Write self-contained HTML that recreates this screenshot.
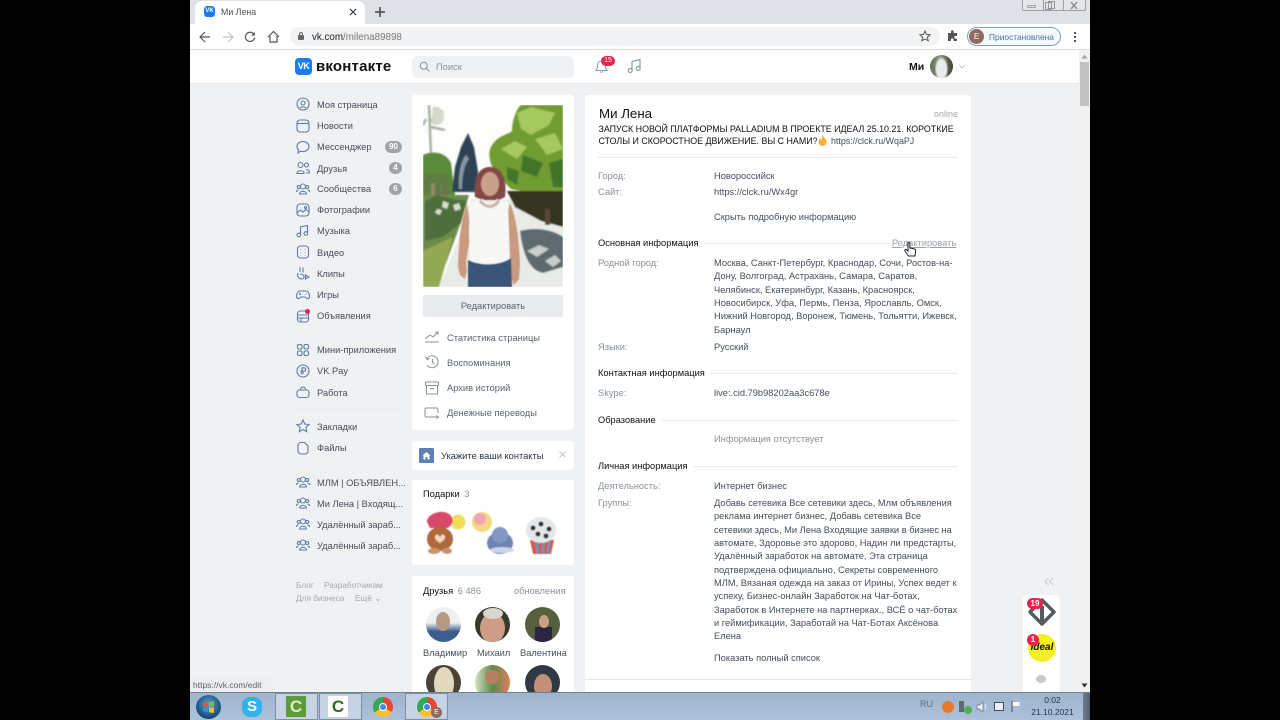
<!DOCTYPE html>
<html lang="ru"><head><meta charset="utf-8"><title>Ми Лена</title>
<style>
html,body{margin:0;padding:0;background:#000;width:1280px;height:720px;overflow:hidden}
body{font-family:"Liberation Sans","Noto Sans CJK SC",sans-serif;position:relative}
div,span,svg{position:absolute}
.t{white-space:nowrap;font-size:9.3px;line-height:12px;color:#2a3a4a;margin-top:1px}
.g{color:#8a929b}.b{color:#454f5b}.k{color:#111}.c{color:#5b6570}
.card{background:#fff;border-radius:3px}
.ln{background:#e8eaed;height:1px}
.ic{fill:none;stroke:#5f7ba6;stroke-width:1.1;width:14px;height:14px}
.badge{background:#a0a3a8;color:#fff;border-radius:7px;height:12px;font-size:8px;line-height:12px;text-align:center;font-weight:bold}
.av{border-radius:50%;overflow:hidden}
.pi{fill:none;stroke:#8b939c;stroke-width:1;width:16px;height:14px}
</style></head><body>
<div id="win" style="left:190px;top:0;width:900px;height:720px;background:#eff1f3;overflow:hidden;filter:blur(.35px)">

<!-- tab strip -->
<div style="left:0;top:0;width:900px;height:24px;background:#dee1e6"></div>
<div style="left:5px;top:1px;width:170px;height:23px;background:#fff;border-radius:7px 7px 0 0"></div>
<div style="left:14px;top:6px;width:11px;height:11px;background:#1a7cf2;border-radius:3px;color:#fff;font-size:6px;line-height:11px;text-align:center;font-weight:bold">VK</div>
<div class="t" style="left:31px;top:5px;color:#4a4f55;font-size:8.800px">Ми Лена</div>
<svg style="left:159px;top:8px;width:8px;height:8px" viewBox="0 0 9 9"><path d="M1 1l7 7M8 1L1 8" stroke="#333" stroke-width="1.300"/></svg>
<svg style="left:185px;top:7px;width:10px;height:10px" viewBox="0 0 10 10"><path d="M5 0v10M0 5h10" stroke="#444" stroke-width="1.500"/></svg>
<!-- window buttons -->
<div style="left:832px;top:0;width:64px;height:11px;border:1px solid #9aa0a6;border-top:0;border-radius:0 0 2px 2px;box-sizing:border-box;background:#e3e5e8"></div>
<div style="left:853px;top:0;width:1px;height:11px;background:#9aa0a6"></div>
<div style="left:873px;top:0;width:1px;height:11px;background:#9aa0a6"></div>
<div style="left:837px;top:5px;width:9px;height:3px;border:1px solid #9aa0a6;border-radius:1px;box-sizing:border-box"></div>
<div style="left:855px;top:2px;width:7px;height:8px;border:1px solid #8f959b;box-sizing:border-box"></div>
<div style="left:858px;top:1px;width:7px;height:8px;border:1px solid #8f959b;box-sizing:border-box"></div>
<svg style="left:880px;top:2px;width:8px;height:7px" viewBox="0 0 8 7"><path d="M1 0l6 7M7 0L1 7" stroke="#858b91" stroke-width="1.400"/></svg>

<!-- toolbar -->
<div style="left:0;top:24px;width:900px;height:25px;background:#fff"></div>
<div style="left:0;top:49px;width:900px;height:1px;background:#d8dade"></div>
<svg style="left:9px;top:31px;width:12px;height:12px" viewBox="0 0 12 12"><path d="M11 6H1.500M6 1L1 6l5 5" fill="none" stroke="#555" stroke-width="1.200"/></svg>
<svg style="left:32px;top:31px;width:12px;height:12px" viewBox="0 0 12 12"><path d="M1 6h9.500M6 1l5 5-5 5" fill="none" stroke="#c0c3c7" stroke-width="1.200"/></svg>
<svg style="left:54px;top:31px;width:12px;height:12px" viewBox="0 0 12 12"><path d="M10 3.500A4.600 4.600 0 1 0 10.600 6.500" fill="none" stroke="#555" stroke-width="1.200"/><path d="M10.800 1v3.600H7.200z" fill="#555"/></svg>
<svg style="left:77px;top:30px;width:13px;height:13px" viewBox="0 0 13 13"><path d="M1 7l5.500-5.500L12 7M3 6v6h7V6" fill="none" stroke="#555" stroke-width="1.200"/></svg>
<div style="left:100px;top:27px;width:650px;height:19px;background:#f1f3f4;border-radius:10px"></div>
<div style="left:108px;top:35px;width:6px;height:5px;background:#666;border-radius:1px"></div>
<div style="left:109px;top:32px;width:4px;height:4px;border:1px solid #666;border-bottom:0;border-radius:2px 2px 0 0;box-sizing:border-box"></div>
<div class="t" style="left:122px;top:31px;font-size:9.800px;color:#777"><span style="position:static;color:#222">vk.com</span>/milena89898</div>
<svg style="left:729px;top:30px;width:12px;height:12px" viewBox="0 0 12 12"><path d="M6 1l1.500 3.400 3.700.4-2.800 2.400.8 3.600L6 9l-3.200 1.800.8-3.600L.8 4.800l3.700-.4z" fill="none" stroke="#555" stroke-width="1"/></svg>
<svg style="left:757px;top:30px;width:12px;height:12px" viewBox="0 0 12 12"><path d="M1 3h3V1.500a1.300 1.300 0 0 1 2.600 0V3H10v3h-1.300a1.400 1.400 0 0 0 0 2.800H10V11H6.500V9.700a1.300 1.300 0 0 0-2.600 0V11H1z" fill="#555"/></svg>
<div style="left:777px;top:27px;width:94px;height:19px;border:1px solid #7f9cc7;border-radius:10px;box-sizing:border-box;background:#f5f8fd"></div>
<div style="left:779px;top:29px;width:15px;height:15px;border-radius:50%;background:#93695f;color:#fff;font-size:8px;line-height:15px;text-align:center">E</div>
<div class="t" style="left:799px;top:30px;color:#4a72b0;font-size:8.400px">Приостановлена</div>
<div style="left:884px;top:32px;width:2px;height:2px;background:#555;box-shadow:0 4px 0 #555,0 8px 0 #555"></div>

<!-- vk header -->
<div style="left:0;top:50px;width:889px;height:33px;background:#fff"></div>
<div style="left:0;top:83px;width:889px;height:1px;background:#e7e8ea"></div>
<div style="left:105px;top:58px;width:17px;height:17px;background:#1a7cf2;border-radius:4px;color:#fff;font-size:9px;line-height:17px;text-align:center;font-weight:bold;letter-spacing:-.5px">VK</div>
<div class="t" style="left:126px;top:57px;font-size:15px;line-height:17px;font-weight:bold;color:#111;letter-spacing:.2px">вконтакте</div>
<div style="left:222px;top:56px;width:162px;height:22px;background:#eff1f3;border-radius:5px"></div>
<svg style="left:229px;top:61px;width:11px;height:11px" viewBox="0 0 11 11"><circle cx="4.700" cy="4.700" r="3.500" fill="none" stroke="#909aa5" stroke-width="1.100"/><path d="M7.300 7.300l3 3" stroke="#909aa5" stroke-width="1.100"/></svg>
<div class="t g" style="left:246px;top:60px">Поиск</div>
<svg style="left:404px;top:59px;width:15px;height:15px" viewBox="0 0 15 15"><path d="M7.500 2a4 4 0 0 0-4 4v3L2 11.500h11L11.500 9V6a4 4 0 0 0-4-4zM6 13h3" fill="none" stroke="#8a9fbb" stroke-width="1.100"/></svg>
<div style="left:411px;top:56px;width:14px;height:10px;background:#e6244f;border-radius:5px;color:#fff;font-size:7px;line-height:10px;text-align:center">15</div>
<svg style="left:437px;top:58px;width:15px;height:16px" viewBox="0 0 15 16"><path d="M5 12.500V3.500L13 1.500V10.500" fill="none" stroke="#7d93b0" stroke-width="1.100"/><circle cx="3.200" cy="12.500" r="2" fill="none" stroke="#7d93b0" stroke-width="1.100"/><circle cx="11.200" cy="10.500" r="2" fill="none" stroke="#7d93b0" stroke-width="1.100"/></svg>
<div class="t k" style="left:719px;top:60px;font-weight:bold;font-size:10.500px">Ми</div>
<div class="av" style="left:740px;top:55px;width:23px;height:23px;background:radial-gradient(ellipse 30% 55% at 50% 60%,#e8ecec 0 70%,transparent 100%),linear-gradient(90deg,#5d7050,#8a9678 40%,#3c4230)"></div>
<svg style="left:768px;top:64px;width:8px;height:5px" viewBox="0 0 8 5"><path d="M1 1l3 3 3-3" fill="none" stroke="#c4c8cc"/></svg>

<!-- left menu -->
<svg class="ic" style="left:106px;top:97px" viewBox="0 0 14 14"><circle cx="7" cy="7" r="6"/><circle cx="7" cy="6" r="2"/><path d="M3.800 11c1-1.500 5.400-1.500 6.400 0"/></svg>
<div class="t b" style="left:127px;top:98px">Моя страница</div>
<svg class="ic" style="left:106px;top:119px" viewBox="0 0 14 14"><rect x="1" y="1" width="12" height="12" rx="3"/><path d="M1 4.500h12"/></svg>
<div class="t b" style="left:127px;top:119px">Новости</div>
<svg class="ic" style="left:106px;top:140px" viewBox="0 0 14 14"><path d="M7 1.500c3.300 0 6 2.200 6 5s-2.700 5-6 5c-.9 0-1.700-.1-2.400-.4L2 13l.5-3C1.500 9 1 7.800 1 6.500c0-2.800 2.700-5 6-5z"/></svg>
<div class="t b" style="left:127px;top:140px">Мессенджер</div>
<div class="badge" style="left:195px;top:141px;width:17px">90</div>
<svg class="ic" style="left:106px;top:161px" viewBox="0 0 14 14"><circle cx="4.500" cy="4" r="2.500"/><circle cx="10.500" cy="4" r="2"/><path d="M1 12c0-3 7-3 7 0v.5H1zM10 8.500c2 0 3.500 1 3.500 3.500H10"/></svg>
<div class="t b" style="left:127px;top:162px">Друзья</div>
<div class="badge" style="left:199px;top:162px;width:13px">4</div>
<svg class="ic" style="left:106px;top:182px" viewBox="0 0 14 14"><circle cx="7" cy="4.500" r="2.500"/><circle cx="2.800" cy="5" r="1.500"/><circle cx="11.200" cy="5" r="1.500"/><path d="M3.500 12c0-3.500 7-3.500 7 0zM.5 10c0-1.500 1-2 2-2M13.500 10c0-1.500-1-2-2-2"/></svg>
<div class="t b" style="left:127px;top:182px">Сообщества</div>
<div class="badge" style="left:199px;top:183px;width:13px">6</div>
<svg class="ic" style="left:106px;top:203px" viewBox="0 0 14 14"><rect x="1" y="1" width="12" height="12" rx="3"/><path d="M1 10l3.500-3 2.500 2 3-2.500 3 2.500"/><circle cx="9.500" cy="4.500" r="1"/></svg>
<div class="t b" style="left:127px;top:203px">Фотографии</div>
<svg class="ic" style="left:106px;top:224px" viewBox="0 0 14 14"><path d="M4.500 11V3l7-1.500V9.500"/><circle cx="2.800" cy="11" r="1.800"/><circle cx="9.800" cy="9.500" r="1.800"/></svg>
<div class="t b" style="left:127px;top:224px">Музыка</div>
<svg class="ic" style="left:106px;top:245px" viewBox="0 0 14 14"><rect x="1.500" y="1" width="11" height="12" rx="3"/><path d="M5 4v.5M5 7v.5M5 10v.5M9 4v.5M9 7v.5M9 10v.5"/></svg>
<div class="t b" style="left:127px;top:246px">Видео</div>
<svg class="ic" style="left:106px;top:266px" viewBox="0 0 14 14"><path d="M4 1v5M7 1.500v5M2 7c-1 2 0 6 3.500 6 1.500 0 2.500-1 2.500-2.500S6 8 4 8"/><path d="M9.500 9l3.500 2-3.500 2z"/></svg>
<div class="t b" style="left:127px;top:267px">Клипы</div>
<svg class="ic" style="left:106px;top:288px" viewBox="0 0 14 14"><path d="M4 3h6c2 0 3 2 3.500 5 .3 2-1.500 3.500-3 2L9 9H5l-1.500 1c-1.500 1.500-3.300 0-3-2C1 5 2 3 4 3z"/><path d="M4 5v2M3 6h2M9.500 6h1"/></svg>
<div class="t b" style="left:127px;top:288px">Игры</div>
<svg class="ic" style="left:106px;top:309px" viewBox="0 0 14 14"><rect x="1.500" y="2" width="11" height="11" rx="2.500"/><path d="M1.500 6h11M1.500 9h11M5 9v4"/></svg>
<div style="left:115px;top:309px;width:5px;height:5px;background:#e6244f;border-radius:50%"></div>
<div class="t b" style="left:127px;top:309px">Объявления</div>
<svg class="ic" style="left:106px;top:343px" viewBox="0 0 14 14"><rect x="1.500" y="1.500" width="4.500" height="4.500" rx="1.500"/><rect x="8" y="1.500" width="4.500" height="4.500" rx="1.500"/><rect x="1.500" y="8" width="4.500" height="4.500" rx="1.500"/><rect x="8" y="8" width="4.500" height="4.500" rx="1.500"/></svg>
<div class="t b" style="left:127px;top:343px">Мини-приложения</div>
<svg class="ic" style="left:106px;top:364px" viewBox="0 0 14 14"><circle cx="7" cy="7" r="6"/><path d="M6 10.500V3.800h2a1.700 1.700 0 0 1 0 3.400H4.500M4.500 9H8"/></svg>
<div class="t b" style="left:127px;top:364px">VK Pay</div>
<svg class="ic" style="left:106px;top:385px" viewBox="0 0 14 14"><rect x="1" y="5" width="12" height="7.500" rx="2.500"/><path d="M4.500 5c0-4 5-4 5 0"/></svg>
<div class="t b" style="left:127px;top:386px">Работа</div>
<div class="ln" style="left:107px;top:409px;width:105px"></div>
<svg class="ic" style="left:106px;top:419px" viewBox="0 0 14 14"><path d="M7 1l1.800 4 4.200.5-3.100 2.900.8 4.300L7 10.500l-3.700 2.200.8-4.300L1 5.500 5.200 5z"/></svg>
<div class="t b" style="left:127px;top:420px">Закладки</div>
<svg class="ic" style="left:106px;top:441px" viewBox="0 0 14 14"><path d="M5 1.500h3.500L12 5v5a3 3 0 0 1-3 3H5a3 3 0 0 1-3-3V4.500a3 3 0 0 1 3-3z"/></svg>
<div class="t b" style="left:127px;top:441px">Файлы</div>
<svg class="ic" style="left:106px;top:475px" viewBox="0 0 14 14"><circle cx="7" cy="4.500" r="2.500"/><circle cx="2.800" cy="5" r="1.500"/><circle cx="11.200" cy="5" r="1.500"/><path d="M3.500 12c0-3.500 7-3.500 7 0zM.5 10c0-1.500 1-2 2-2M13.500 10c0-1.500-1-2-2-2"/></svg>
<div class="t b" style="left:127px;top:476px">МЛМ | ОБЪЯВЛЕН...</div>
<svg class="ic" style="left:106px;top:496px" viewBox="0 0 14 14"><circle cx="7" cy="4.500" r="2.500"/><circle cx="2.800" cy="5" r="1.500"/><circle cx="11.200" cy="5" r="1.500"/><path d="M3.500 12c0-3.500 7-3.500 7 0zM.5 10c0-1.500 1-2 2-2M13.500 10c0-1.500-1-2-2-2"/></svg>
<div class="t b" style="left:127px;top:497px">Ми Лена | Входящ...</div>
<svg class="ic" style="left:106px;top:517px" viewBox="0 0 14 14"><circle cx="7" cy="4.500" r="2.500"/><circle cx="2.800" cy="5" r="1.500"/><circle cx="11.200" cy="5" r="1.500"/><path d="M3.500 12c0-3.500 7-3.500 7 0zM.5 10c0-1.500 1-2 2-2M13.500 10c0-1.500-1-2-2-2"/></svg>
<div class="t b" style="left:127px;top:518px">Удалённый зараб...</div>
<svg class="ic" style="left:106px;top:538px" viewBox="0 0 14 14"><circle cx="7" cy="4.500" r="2.500"/><circle cx="2.800" cy="5" r="1.500"/><circle cx="11.200" cy="5" r="1.500"/><path d="M3.500 12c0-3.500 7-3.500 7 0zM.5 10c0-1.500 1-2 2-2M13.500 10c0-1.500-1-2-2-2"/></svg>
<div class="t b" style="left:127px;top:539px">Удалённый зараб...</div>
<div class="t g" style="left:106px;top:578px;font-size:8.300px;color:#a3a9b0">Блог</div>
<div class="t g" style="left:134px;top:578px;font-size:8.300px;color:#a3a9b0">Разработчикам</div>
<div class="t g" style="left:106px;top:591px;font-size:8.300px;color:#a3a9b0">Для бизнеса</div>
<div class="t g" style="left:165px;top:591px;font-size:8.300px;color:#a3a9b0">Ещё ⌄</div>

<!-- photo card -->
<div class="card" style="left:222px;top:95px;width:162px;height:335px"></div>
<svg style="left:233px;top:105px;width:140px;height:182px" viewBox="0 0 140 182" preserveAspectRatio="none">
<defs><filter id="bl"><feGaussianBlur stdDeviation=".7"/></filter><filter id="bl2"><feGaussianBlur stdDeviation=".5"/></filter></defs>
<rect width="140" height="182" fill="#fdfefb"/>
<g filter="url(#bl)">
<!-- bare tree -->
<path d="M6 0l2 50M3 14l-3 6M8 16l12-10M8 22l14 3" stroke="#a8b0a2" stroke-width="2.500" fill="none"/>
<path d="M10 2c6-2 12 4 11 12-2 6-9 8-13 4z" fill="#d3dacb"/>
<!-- left bushes -->
<path d="M0 50c8-4 22-4 28 8l4 32H0z" fill="#5c8a3a"/>
<path d="M0 70h26v22H0z" fill="#5e7d40"/>
<rect x="8" y="78" width="4" height="28" fill="#8f8a6c"/><rect x="17" y="78" width="3" height="22" fill="#77735a"/>
<!-- spruce -->
<path d="M45 28l6 14 3 18 4 27H29l3-25 6-20z" fill="#2f4354"/>
<path d="M43 50c-5 6-8 18-7 34h3c0-12 2-24 7-30z" fill="#8798a2"/>
<!-- right tree -->
<path d="M67 44c6-14 18-14 22-18 0-12 6-26 10-26h41v88l-22 2-30-6-14-14c-6-8-9-18-7-26z" fill="#6f9c33"/>
<path d="M94 8l14-6 24 6-6 12-18 10-10-6zM78 44l14-8 12 6-10 12zM112 34l20-6 8 16-16 6z" fill="#a5c85e"/>
<path d="M100 50l20 8-6 14-16-6zM84 62l12 4-2 14-10-6zM126 58l14-4v28l-10 0z" fill="#43752a"/>
<!-- ground -->
<path d="M0 90h46L37 120 26 150 14 182H0z" fill="#6d8c4c"/>
<path d="M2 96l12-6 16 4 14 2-6 22-18 14-18 4zM6 118l8-6 14 6-10 12-12 4z" fill="#4f6e3e"/>
<path d="M20 96l6 2-2 6-5-2zM30 100l6-2 2 6-6 2zM14 104l5 1-2 5-5-2z" fill="#d6dccd"/>
<path d="M0 146l30-14-14 50H0z" fill="#93a952"/>
<path d="M16 182l18-44 14-44h92v88z" fill="#e9ece6"/>
<path d="M84 86h56v36l-22-6-26-14z" fill="#343522"/>
<rect x="122" y="104" width="5" height="16" fill="#5c4a35"/>
<path d="M97 126c14-4 32-2 43 6v30l-20 6c-12-2-20-16-23-42z" fill="#5f696f"/>
<path d="M104 146l12-6 10 4-12 8zM122 156l10-6 6 6-8 6z" fill="#c8cdc9"/>
</g>
<g filter="url(#bl2)">
<path d="M52 92c-2-16 2-30 15-30s17 14 15 30l-6 3H60z" fill="#834a47"/>
<ellipse cx="67" cy="79" rx="9" ry="12" fill="#c9a08a"/>
<path d="M44 98c-5 14-8 32-9 64l2 8 5 4 2-8-1-10 5-28zM87 98c5 12 9 30 10 62l-1 14-5 6-4-10-2-30-2-26z" fill="#c99a80"/>
<path d="M47 97l13-3c4 6 10 6 14 0l11 3 1 30 1 28c-12 8-28 8-40 0l-1-28z" fill="#f7f7f5"/>
<path d="M58 94c5 8 12 8 17 0l2 3c-6 8-14 8-21 0z" fill="#cdb5aa"/>
<path d="M45 155c12 6 32 6 43-2l1 29H45z" fill="#3a5478"/>
</g>
</svg>
<div style="left:233px;top:295px;width:140px;height:22px;background:#e9ebee;border-radius:2px"></div>
<div class="t c" style="left:233px;top:299px;width:140px;text-align:center">Редактировать</div>
<svg class="pi" style="left:234px;top:330px" viewBox="0 0 16 14"><path d="M1 9l5-4 3 2 5-5M11 2h3v3M1 12h14"/></svg>
<div class="t c" style="left:257px;top:331px">Статистика страницы</div>
<svg class="pi" style="left:234px;top:355px" viewBox="0 0 16 14"><path d="M3 3.500A6 6 0 1 1 3 10M1.500 1.500L3 4.500l3-1M8.500 4v3.500l2 1.500"/></svg>
<div class="t c" style="left:257px;top:356px">Воспоминания</div>
<svg class="pi" style="left:234px;top:381px" viewBox="0 0 16 14"><rect x="1.500" y="1" width="13" height="3.500"/><path d="M2.500 4.500V13h11V4.500M6 7.500h4"/></svg>
<div class="t c" style="left:257px;top:381px">Архив историй</div>
<svg class="pi" style="left:234px;top:406px" viewBox="0 0 16 14"><path d="M14 7V3.500a1.500 1.500 0 0 0-1.500-1.500h-10A1.500 1.500 0 0 0 1 3.500v6A1.500 1.500 0 0 0 2.500 11H14M12.500 9.500L14.500 11l-2 1.500"/></svg>
<div class="t c" style="left:257px;top:406px">Денежные переводы</div>

<!-- contacts -->
<div class="card" style="left:222px;top:441px;width:162px;height:29px"></div>
<div style="left:229px;top:448px;width:15px;height:15px;background:#5d81b6;border-radius:1px"></div>
<svg style="left:232px;top:451px;width:9px;height:9px" viewBox="0 0 9 9"><path d="M4.500 1L8.500 4.500H7.500V8.500H5.500V6h-2v2.500h-2V4.500H.5z" fill="#fff"/></svg>
<div class="t" style="left:251px;top:449px;color:#2a3440">Укажите ваши контакты</div>
<svg style="left:369px;top:451px;width:7px;height:7px" viewBox="0 0 7 7"><path d="M.5.5l6 6M6.500.5l-6 6" stroke="#c3c8ce"/></svg>

<!-- gifts -->
<div class="card" style="left:222px;top:480px;width:162px;height:85px"></div>
<div class="t k" style="left:233px;top:487px">Подарки <span style="position:static;color:#8a929b;margin-left:2px">3</span></div>
<svg style="left:232px;top:508px;width:150px;height:50px" viewBox="0 0 150 50">
<g filter="url(#bl2)">
<circle cx="36" cy="14" r="7.500" fill="#f0dd5a"/>
<path d="M5 14c0-9 16-13 22-8 6 4 4 12-2 14H8z" fill="#d84a6a"/>
<ellipse cx="18" cy="31" rx="13" ry="12" fill="#b0683a"/>
<path d="M13 28c2-3 4-1 5 1 1-2 3-4 5-1 1 3-3 6-5 7-2-1-6-4-5-7z" fill="#f2d6c2"/>
<ellipse cx="12" cy="43" rx="6" ry="3" fill="#c9936b"/><ellipse cx="25" cy="43" rx="5" ry="3" fill="#c9936b"/>
<circle cx="60" cy="14" r="10" fill="#f3d980"/><circle cx="58" cy="11" r="6" fill="#ec92c4" opacity=".7"/>
<ellipse cx="78" cy="35" rx="13" ry="11" fill="#6f83b4"/><circle cx="78" cy="27" r="8" fill="#8197c4"/><ellipse cx="80" cy="42" rx="12" ry="3" fill="#cad6ea"/>
<path d="M108 32h24l-3 14h-18z" fill="#d9583e"/><path d="M114 32l2 14M121 32v14M127 32l-1 14" stroke="#5b97cf" stroke-width="2.500"/>
<ellipse cx="119" cy="22" rx="15" ry="13" fill="#e3e7ea"/>
<circle cx="111" cy="20" r="2.500" fill="#333"/><circle cx="119" cy="16" r="2.500" fill="#333"/><circle cx="127" cy="21" r="2.500" fill="#333"/><circle cx="116" cy="26" r="2.500" fill="#333"/><circle cx="124" cy="28" r="2.500" fill="#333"/>
</g></svg>

<!-- friends -->
<div class="card" style="left:222px;top:576px;width:162px;height:120px"></div>
<div class="t k" style="left:233px;top:584px">Друзья <span style="position:static;color:#8a929b;margin-left:2px">6 486</span></div>
<div class="t g" style="left:324px;top:584px">обновления</div>
<div class="av" style="left:236px;top:607px;width:35px;height:35px;background:linear-gradient(#eef0ee 0 45%,#3c5d8c 70%)"><div style="left:10px;top:5px;width:14px;height:19px;background:#b79a86;border-radius:50%"></div></div>
<div class="av" style="left:285px;top:607px;width:35px;height:35px;background:#38382c"><div style="left:5px;top:6px;width:25px;height:30px;background:#cf9d86;border-radius:50%"></div><div style="left:8px;top:1px;width:20px;height:11px;background:#d9d6cd;border-radius:50%"></div></div>
<div class="av" style="left:335px;top:607px;width:35px;height:35px;background:#56603c"><div style="left:10px;top:20px;width:17px;height:16px;background:#2a2440"></div><div style="left:14px;top:8px;width:10px;height:13px;background:#c99f87;border-radius:50%"></div></div>
<div class="t b" style="left:233px;top:646px">Владимир</div>
<div class="t b" style="left:287px;top:646px">Михаил</div>
<div class="t b" style="left:330px;top:646px">Валентина</div>
<div class="av" style="left:236px;top:665px;width:35px;height:35px;background:#4b4236"><div style="left:8px;top:2px;width:20px;height:33px;background:#e2d8bd;border-radius:50%"></div></div>
<div class="av" style="left:285px;top:665px;width:35px;height:35px;background:linear-gradient(90deg,#d4e2c0,#5c8a4a 50%,#e37f5b)"><div style="left:10px;top:5px;width:14px;height:14px;background:#b78061;border-radius:50%"></div></div>
<div class="av" style="left:335px;top:665px;width:35px;height:35px;background:#2f3a44"><div style="left:9px;top:9px;width:18px;height:24px;background:#c69076;border-radius:50%"></div></div>

<!-- main card -->
<div class="card" style="left:395px;top:95px;width:386px;height:610px"></div>
<div class="t k" style="left:409px;top:105px;font-size:13.300px;line-height:16px">Ми Лена</div>
<div class="t g" style="left:744px;top:107px;font-size:9px;color:#a2a8ae">online</div>
<div class="t k" style="left:408.500px;top:122px;font-size:8.870px">ЗАПУСК НОВОЙ ПЛАТФОРМЫ PALLADIUM В ПРОЕКТЕ ИДЕАЛ 25.10.21. КОРОТКИЕ</div>
<div class="t k" style="left:408.500px;top:134px;font-size:8.870px">СТОЛЫ И СКОРОСТНОЕ ДВИЖЕНИЕ. ВЫ С НАМИ?</div>
<svg style="left:627px;top:134px;width:11px;height:12px" viewBox="0 0 11 12"><path d="M5.500 1c1 2 4 4 4 7a4 4 0 0 1-8 0c0-2 1-3 2-4 0 1 .5 1.500 1 1.500C5 4 5 2.500 5.500 1z" fill="#f4b23a"/></svg>
<div class="t b" style="left:641px;top:134px;font-size:8.870px">https://clck.ru/WqaPJ</div>
<div class="ln" style="left:408px;top:157px;width:360px"></div>

<div class="t g" style="left:408px;top:169px">Город:</div><div class="t b" style="left:524px;top:169px">Новороссийск</div>
<div class="t g" style="left:408px;top:185px">Сайт:</div><div class="t b" style="left:524px;top:185px">https://clck.ru/Wx4gr</div>
<div class="t b" style="left:524px;top:210px">Скрыть подробную информацию</div>

<div class="t k" style="left:408px;top:236px">Основная информация</div>
<div class="ln" style="left:514px;top:243px;width:186px"></div>
<div class="t" style="left:702px;top:236px;color:#9aa1a9;text-decoration:underline">Редактировать</div>

<div class="t g" style="left:408px;top:256px">Родной город:</div>
<div class="t b" style="left:524px;top:256px">Москва, Санкт-Петербург, Краснодар, Сочи, Ростов-на-</div>
<div class="t b" style="left:524px;top:269px">Дону, Волгоград, Астрахань, Самара, Саратов,</div>
<div class="t b" style="left:524px;top:283px">Челябинск, Екатеринбург, Казань, Красноярск,</div>
<div class="t b" style="left:524px;top:296px">Новосибирск, Уфа, Пермь, Пенза, Ярославль, Омск,</div>
<div class="t b" style="left:524px;top:309px">Нижний Новгород, Воронеж, Тюмень, Тольятти, Ижевск,</div>
<div class="t b" style="left:524px;top:323px">Барнаул</div>
<div class="t g" style="left:408px;top:340px">Языки:</div><div class="t b" style="left:524px;top:340px">Русский</div>

<div class="t k" style="left:408px;top:366px">Контактная информация</div>
<div class="ln" style="left:520px;top:373px;width:248px"></div>
<div class="t g" style="left:408px;top:386px">Skype:</div><div class="t b" style="left:524px;top:386px">live:.cid.79b98202aa3c678e</div>

<div class="t k" style="left:408px;top:413px">Образование</div>
<div class="ln" style="left:472px;top:420px;width:296px"></div>
<div class="t g" style="left:524px;top:432px">Информация отсутствует</div>

<div class="t k" style="left:408px;top:459px">Личная информация</div>
<div class="ln" style="left:504px;top:466px;width:264px"></div>
<div class="t g" style="left:408px;top:479px">Деятельность:</div><div class="t b" style="left:524px;top:479px">Интернет бизнес</div>
<div class="t g" style="left:408px;top:496px">Группы:</div>
<div class="t b" style="left:524px;top:496px">Добавь сетевика Все сетевики здесь, Млм объявления</div>
<div class="t b" style="left:524px;top:509px">реклама интернет бизнес, Добавь сетевика Все</div>
<div class="t b" style="left:524px;top:523px">сетевики здесь, Ми Лена Входящие заявки в бизнес на</div>
<div class="t b" style="left:524px;top:536px">автомате, Здоровье это здорово, Надин ли предстарты,</div>
<div class="t b" style="left:524px;top:549px">Удалённый заработок на автомате, Эта страница</div>
<div class="t b" style="left:524px;top:563px">подтверждена официально, Секреты современного</div>
<div class="t b" style="left:524px;top:576px">МЛМ, Вязаная одежда на заказ от Ирины, Успех ведет к</div>
<div class="t b" style="left:524px;top:589px">успеху, Бизнес-онлайн Заработок на Чат-ботах,</div>
<div class="t b" style="left:524px;top:603px">Заработок в Интернете на партнерках., ВСЁ о чат-ботах</div>
<div class="t b" style="left:524px;top:616px">и геймификации, Заработай на Чат-Ботах Аксёнова</div>
<div class="t b" style="left:524px;top:629px">Елена</div>
<div class="t b" style="left:524px;top:651px">Показать полный список</div>
<div class="ln" style="left:395px;top:679px;width:386px;background:#e2e4e7"></div>

<!-- hand cursor -->
<svg style="left:714px;top:241px;width:13px;height:17px" viewBox="0 0 13 17"><path d="M4 1.500c.8-.8 1.800-.3 1.800.7V7l4 .8c1.500.3 2 1 1.800 2.500l-.6 4.700H4.500L1 10c-.7-1 .5-2 1.500-1.300L4 10V2z" fill="#fff" stroke="#222" stroke-width="1"/></svg>

<!-- right widget -->
<div style="left:833px;top:595px;width:37px;height:100px;background:#fff;border-radius:4px"></div>
<svg style="left:854px;top:577px;width:10px;height:9px" viewBox="0 0 10 9"><path d="M4.500 1L1 4.500 4.500 8M9 1L5.500 4.500 9 8" fill="none" stroke="#c8ccd1"/></svg>
<svg style="left:837px;top:597px;width:30px;height:30px" viewBox="0 0 30 30"><path d="M15 3L27 15 15 27 3 15z" fill="none" stroke="#555b60" stroke-width="3.500" stroke-linejoin="round"/><rect x="13" y="9" width="4" height="15" fill="#555b60"/></svg>
<div style="left:837px;top:598px;width:16px;height:11px;background:#e6244f;border-radius:6px;color:#fff;font-size:8px;line-height:11px;text-align:center;font-weight:bold">19</div>
<div style="left:838px;top:634px;width:28px;height:28px;background:#f5f11e;border-radius:50%"></div>
<div class="t" style="left:838px;top:641px;width:28px;text-align:center;color:#111;font:italic bold 10px/12px 'Liberation Sans',sans-serif">Ideal</div>
<div style="left:837px;top:634px;width:12px;height:12px;background:#e6244f;border-radius:50%;color:#fff;font-size:8px;line-height:12px;text-align:center;font-weight:bold">1</div>
<div style="left:846px;top:675px;width:10px;height:8px;background:#c8c9ca;border-radius:50%"></div>

<!-- scrollbar -->
<div style="left:889px;top:50px;width:11px;height:643px;background:#f1f1f1"></div>
<div style="left:890px;top:62px;width:9px;height:44px;background:#c1c1c1"></div>
<svg style="left:891px;top:54px;width:7px;height:5px" viewBox="0 0 7 5"><path d="M3.500.5L6.500 4.500H.5z" fill="#a3a3a3"/></svg>
<svg style="left:891px;top:683px;width:7px;height:5px" viewBox="0 0 7 5"><path d="M.5.5h6L3.500 4.500z" fill="#333"/></svg>

<!-- status -->
<div class="t" style="left:0;top:678px;width:82px;height:15px;background:#eceef0;padding-left:3px;box-sizing:border-box;font-size:8.500px;line-height:15px;color:#5b6570;margin-top:0">https://vk.com/edit</div>

<!-- taskbar -->
<div style="left:0;top:693px;width:900px;height:27px;background:linear-gradient(#9fb4cd,#acc0d8)"></div>
<div style="left:0;top:692px;width:900px;height:1px;background:#6f8096"></div>
<div style="left:6px;top:695px;width:25px;height:24px;border-radius:50%;background:radial-gradient(circle at 50% 40%,#5aa0d0,#164c78 70%,#0f2e4e)"></div>
<svg style="left:12px;top:701px;width:13px;height:12px" viewBox="0 0 13 12"><path d="M1 2l5-1v4.500H1z" fill="#e2562b"/><path d="M7 1l5-.8v5.300H7z" fill="#8ab83c"/><path d="M1 6.500h5V11l-5-1z" fill="#3e8fd6"/><path d="M7 6.500h5V12l-5-.8z" fill="#f3c02d"/></svg>
<div style="left:52px;top:697px;width:20px;height:20px;background:#2fb3ec;border-radius:8px;color:#fff;font-size:15px;line-height:20px;text-align:center;font-weight:bold">S</div>
<div style="left:85px;top:693px;width:43px;height:27px;background:#c5d3e4;border:1px solid #7f8fa3;box-sizing:border-box"></div>
<div style="left:96px;top:696px;width:20px;height:21px;background:#5e9a3a;color:#d8efc4;font-size:17px;line-height:21px;text-align:center;font-weight:bold">C</div>
<div style="left:129px;top:693px;width:43px;height:27px;background:#c5d3e4;border:1px solid #7f8fa3;box-sizing:border-box"></div>
<div style="left:138px;top:696px;width:20px;height:21px;background:#fff;color:#2e6b22;font-size:17px;line-height:21px;text-align:center;font-weight:bold">C</div>
<div style="left:183px;top:697px;width:20px;height:20px;border-radius:50%;background:conic-gradient(#ea4335 0 33%,#fbc02d 33% 66%,#34a853 66%)"></div>
<div style="left:189px;top:703px;width:8px;height:8px;border-radius:50%;background:#3f87e8;border:1px solid #fff;box-sizing:border-box"></div>
<div style="left:215px;top:693px;width:43px;height:27px;background:#c5d3e4;border:1px solid #7f8fa3;box-sizing:border-box"></div>
<div style="left:227px;top:697px;width:20px;height:20px;border-radius:50%;background:conic-gradient(#ea4335 0 33%,#fbc02d 33% 66%,#34a853 66%)"></div>
<div style="left:233px;top:703px;width:8px;height:8px;border-radius:50%;background:#3f87e8;border:1px solid #fff;box-sizing:border-box"></div>
<div style="left:241px;top:707px;width:11px;height:11px;border-radius:50%;background:#93695f;color:#fff;font-size:7px;line-height:11px;text-align:center">E</div>

<div class="t" style="left:730px;top:697px;color:#5f6f85;font-size:9px">RU</div>
<div style="left:752px;top:701px;width:12px;height:12px;border-radius:50%;background:#e8792a"></div>
<div style="left:769px;top:701px;width:5px;height:11px;background:#5d6a72"></div>
<div style="left:774px;top:706px;width:8px;height:8px;border-radius:50%;background:#4caf50"></div>
<svg style="left:786px;top:701px;width:12px;height:12px" viewBox="0 0 12 12"><path d="M1 4h2.500L7 1v10L3.500 8H1z" fill="#e8edf2" stroke="#6a7684" stroke-width=".7"/><path d="M9 3.500c1 1.500 1 3.500 0 5" fill="none" stroke="#eef"/></svg>
<div style="left:804px;top:702px;width:10px;height:9px;background:#eef2f6;border:1px solid #41505f;box-sizing:border-box"></div>
<svg style="left:821px;top:701px;width:10px;height:11px" viewBox="0 0 10 11"><path d="M1 0v11" stroke="#41505f"/><path d="M1.500 1h8l-1.500 2 1.500 2h-8z" fill="#f3f5f7"/></svg>
<div class="t" style="left:835px;top:694px;width:55px;text-align:center;color:#243548;font-size:8.500px;line-height:11px">0:02</div>
<div class="t" style="left:835px;top:706px;width:55px;text-align:center;color:#243548;font-size:8.500px;line-height:11px">21.10.2021</div>
<div style="left:893px;top:693px;width:7px;height:27px;background:linear-gradient(90deg,#6f7c8a,#53606e)"></div>
</div>
</body></html>
